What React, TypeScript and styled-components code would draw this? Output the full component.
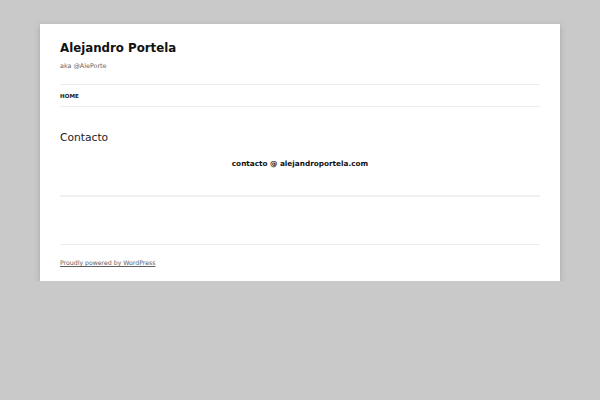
import styled, { createGlobalStyle } from 'styled-components';

const GlobalStyle = createGlobalStyle`
    html, body {
        margin: 0;
        padding: 0;
        background: #c9c9c9;
        font-family: "DejaVu Sans", "Open Sans", sans-serif;
        color: #444;
    }
`;

const App = () => {
    return (
        <>
            <GlobalStyle />
            <Page>
                <Masthead>
                    <SiteTitle>
                        <TitleLink href="#">Alejandro Portela</TitleLink>
                    </SiteTitle>
                    <Tagline>aka @AlePorte</Tagline>
                    <MainNav>
                        <NavItem href="#">Home</NavItem>
                    </MainNav>
                </Masthead>
                <Main>
                    <EntryTitle>Contacto</EntryTitle>
                    <EntryContent>contacto @ alejandroportela.com</EntryContent>
                    <EntryFooter />
                </Main>
                <SiteInfo>
                    <FooterLink href="#">Proudly powered by WordPress</FooterLink>
                </SiteInfo>
            </Page>
        </>
    );
};

export default App;

const Page = styled.div`
    width: 520px;
    box-sizing: border-box;
    margin: 24px auto 0;
    padding: 0 20px;
    background: #fff;
    box-shadow: 0 2px 6px rgba(100, 100, 100, 0.35);
`;

const Masthead = styled.header`
    padding-top: 14px;
`;

const SiteTitle = styled.h1`
    margin: 0;
    font-size: 11.8px;
    line-height: 20px;
    font-weight: bold;
`;

const TitleLink = styled.a`
    color: #111;
    text-decoration: none;
`;

const Tagline = styled.h2`
    margin: 2px 0 0;
    font-size: 6.4px;
    line-height: 13px;
    font-weight: normal;
    color: #666;
`;

const MainNav = styled.nav`
    margin-top: 11px;
    height: 23px;
    border-top: 1px solid #ededed;
    border-bottom: 1px solid #ededed;
    box-sizing: border-box;
    display: flex;
    align-items: center;
`;

const NavItem = styled.a`
    font-size: 5.6px;
    font-weight: bold;
    text-transform: uppercase;
    color: #222;
    text-decoration: none;
    line-height: 10px;
`;

const Main = styled.main`
    padding-top: 22px;
`;

const EntryTitle = styled.h1`
    margin: 0;
    font-size: 10.7px;
    line-height: 18px;
    font-weight: normal;
    color: #222;
`;

const EntryContent = styled.p`
    margin: 12px 0 0;
    text-align: center;
    font-size: 7.3px;
    line-height: 10px;
    font-weight: bold;
    color: #111;
`;

const EntryFooter = styled.div`
    margin-top: 26px;
    height: 2px;
    background: #f0f0f0;
`;

const SiteInfo = styled.footer`
    margin-top: 47px;
    border-top: 1px solid #ededed;
    padding: 13px 0 13px;
    font-size: 6.2px;
    line-height: 10px;
`;

const FooterLink = styled.a`
    color: #5e5e5e;
    text-decoration: underline;
`;
